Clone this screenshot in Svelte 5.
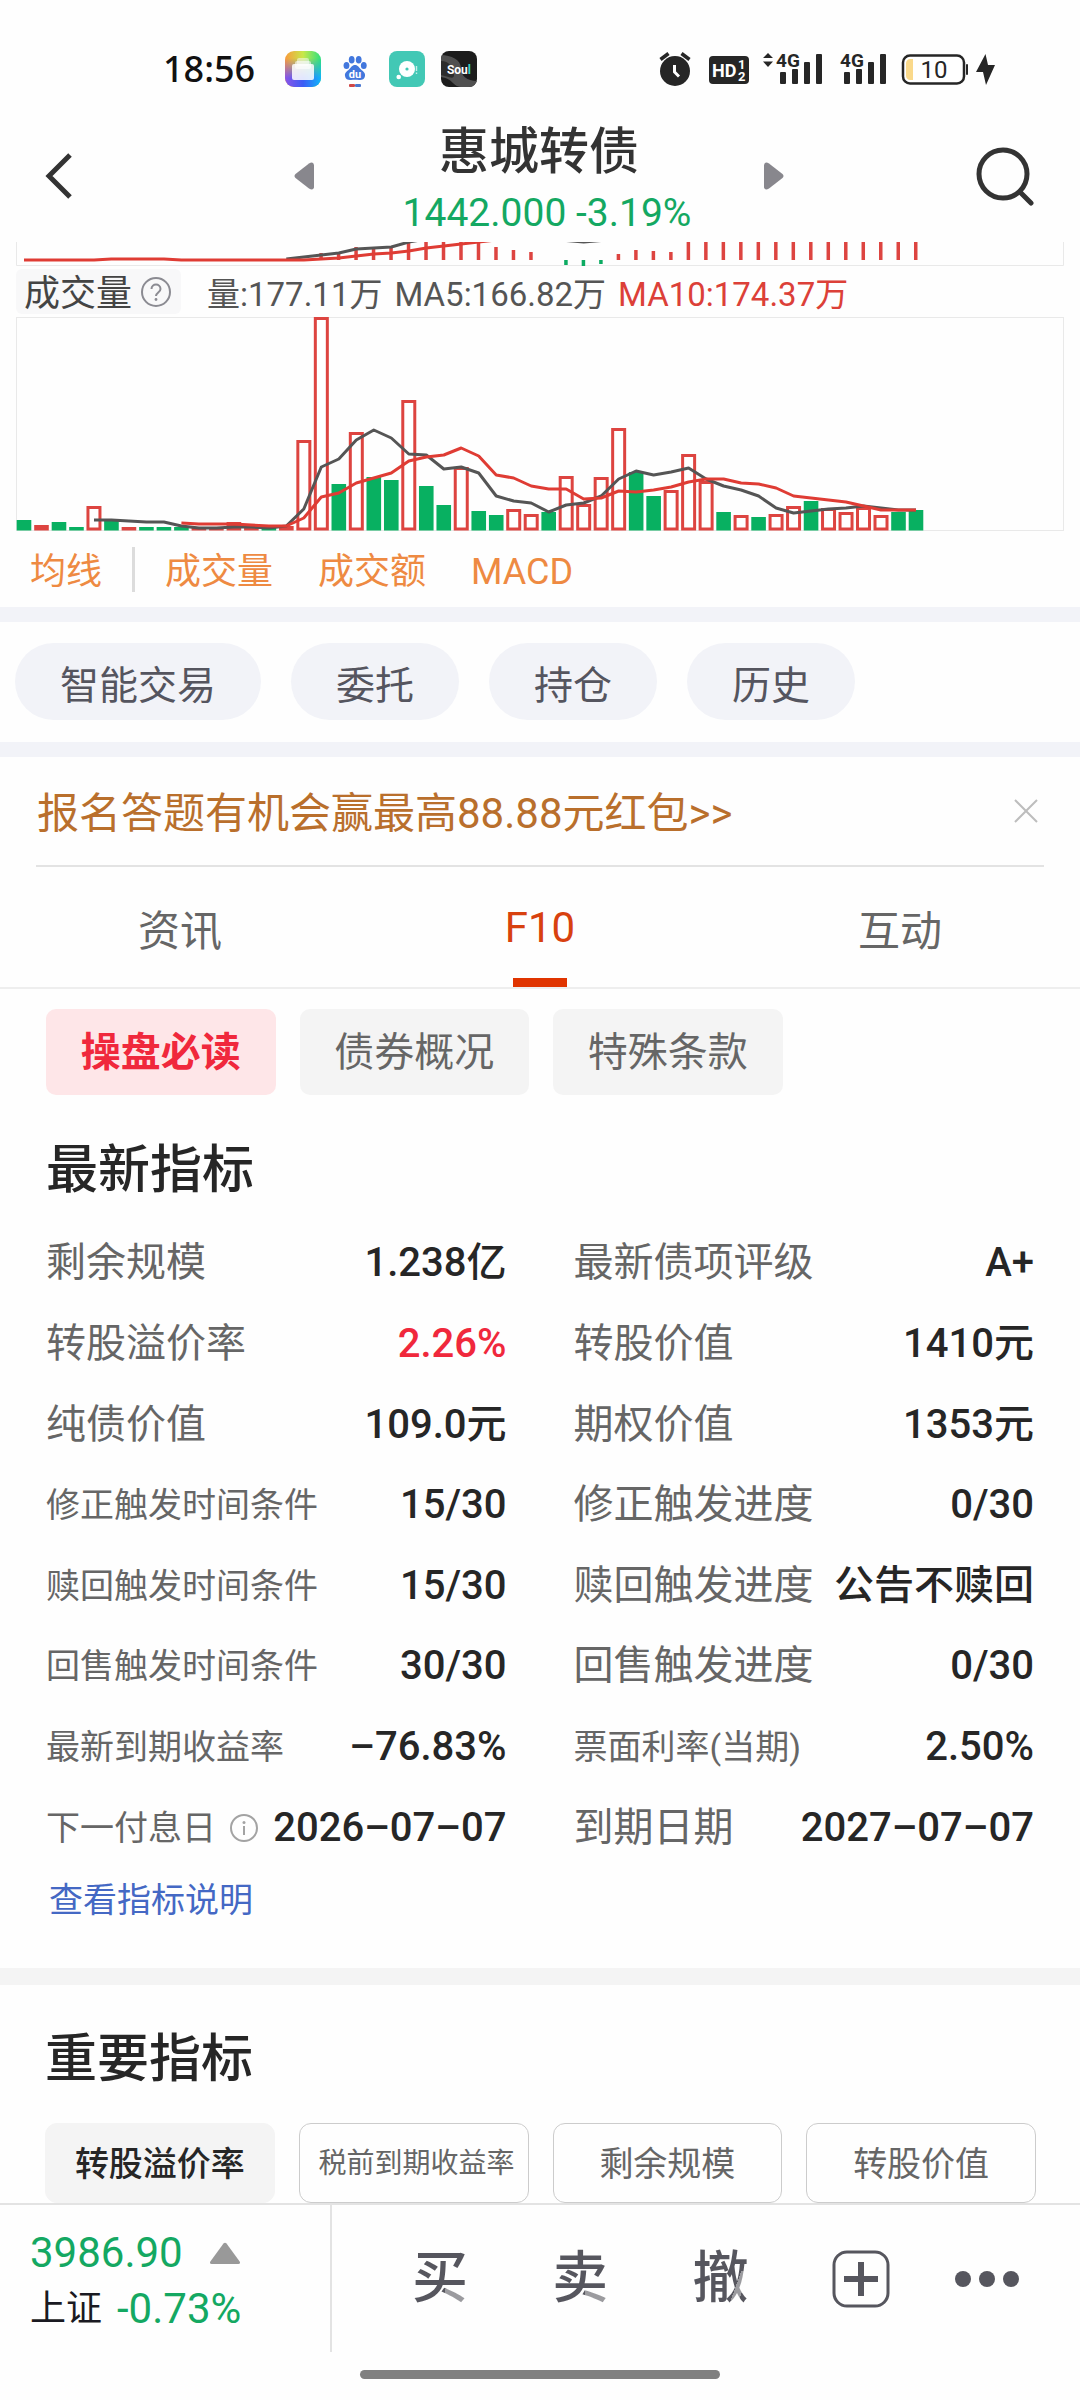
<script lang="ts">
  // Chart units: the plot is 213 units tall and its floor is y = 213.
  const STEP = 17.49;
  const FLOOR = 213;
  const cx = (i: number) => 8 + STEP * i;

  type Bar = [number, 'u' | 'd'];
  const volumes: Bar[] = [
    [10, 'd'], [5, 'u'], [8, 'd'], [3, 'd'], [24, 'u'], [9, 'd'], [3, 'u'], [3, 'd'], [3, 'd'], [3, 'd'],
    [3, 'u'], [3, 'u'], [8, 'u'], [3, 'u'], [3, 'd'], [4, 'u'], [90, 'u'], [213, 'u'], [46, 'd'], [98, 'u'],
    [53, 'd'], [50, 'd'], [130, 'u'], [44, 'd'], [25, 'd'], [63, 'u'], [19, 'd'], [15, 'd'], [21, 'u'], [16, 'u'],
    [18, 'd'], [54, 'u'], [26, 'u'], [53, 'u'], [102, 'u'], [58, 'd'], [34, 'd'], [40, 'u'], [76, 'u'], [49, 'u'],
    [18, 'd'], [15, 'u'], [13, 'd'], [16, 'u'], [24, 'u'], [29, 'd'], [22, 'u'], [18, 'u'], [23, 'u'], [15, 'u'],
    [18, 'd'], [20, 'd']
  ];
  const ma5 = [
    10, 10, 9, 8, 8, 4, 2, 2, 3, 3, 2, 4, 21, 63, 71, 90, 100, 92, 76, 75, 61, 63, 57, 34, 29, 27, 18, 25, 27, 34,
    51, 59, 55, 58, 62, 51, 44, 40, 34, 22, 17, 19, 21, 22, 24, 22, 20, 20
  ];
  const ma10 = [
    7, 6, 6, 6, 5, 4, 4, 12, 33, 37, 47, 52, 57, 69, 73, 75, 82, 74, 55, 52, 44, 41, 41, 31, 32, 39, 38, 40, 43, 48,
    51, 51, 47, 46, 42, 34, 32, 30, 28, 24, 20, 20, 20
  ];
  const pts = (ys: number[], start: number) => ys.map((y, k) => `${cx(start + k).toFixed(1)},${y}`).join(' ');
  const above = (vs: number[]) => vs.map((v) => FLOOR - v);

  // MACD columns: [index, top, bottom], zero line at y = 18.
  const sticks: [number, number, number][] = [
    [17, 11, 18], [18, 12, 18], [19, 5, 18], [20, 7, 18], [21, 6, 18], [22, 0, 18], [23, 0, 18], [24, 0, 18],
    [25, 0, 18], [26, 0, 18], [27, 5, 18], [28, 8, 18], [29, 10, 18], [31, 18, 23], [32, 18, 24], [33, 18, 22],
    [34, 12, 18], [35, 8, 18], [36, 9, 18], [37, 10, 18],
    ...Array.from({ length: 14 }, (_, k): [number, number, number] => [38 + k, 0, 18])
  ];
  const dea = [18, 18, 18, 18, 18, 17, 17, 17, 17, 18, 18, 18, 18, 18, 18, 18, 18, 17, 16, 14, 12, 11, 9, 6, 4, 2, 0, -2];
  const dif = [17, 15, 13, 11, 7, 6, 5, 0, -3];

  const actions = ['智能交易', '委托', '持仓', '历史'];
  const tabs = ['资讯', 'F10', '互动'];
  const sections = ['操盘必读', '债券概况', '特殊条款'];
  const metrics = ['转股溢价率', '税前到期收益率', '剩余规模', '转股价值'];
  let tab = $state('F10');
  let section = $state('操盘必读');
  let metric = $state('转股溢价率');

  type Item = { k: string; v: string; small?: boolean; red?: boolean; info?: boolean };
  const items: Item[] = [
    { k: '剩余规模', v: '1.238亿' },
    { k: '最新债项评级', v: 'A+' },
    { k: '转股溢价率', v: '2.26%', red: true },
    { k: '转股价值', v: '1410元' },
    { k: '纯债价值', v: '109.0元' },
    { k: '期权价值', v: '1353元' },
    { k: '修正触发时间条件', v: '15/30', small: true },
    { k: '修正触发进度', v: '0/30' },
    { k: '赎回触发时间条件', v: '15/30', small: true },
    { k: '赎回触发进度', v: '公告不赎回' },
    { k: '回售触发时间条件', v: '30/30', small: true },
    { k: '回售触发进度', v: '0/30' },
    { k: '最新到期收益率', v: '–76.83%', small: true },
    { k: '票面利率(当期)', v: '2.50%', small: true },
    { k: '下一付息日', v: '2026–07–07', small: true, info: true },
    { k: '到期日期', v: '2027–07–07' }
  ];
</script>

{#snippet signal(arrows: boolean)}
  <svg class="signal" class:second={!arrows} width={arrows ? 60 : 48} height="36" viewBox="{arrows ? 0 : 12} 0 {arrows ? 60 : 48} 36" aria-hidden="true">
    {#if arrows}
      <path d="M0 7l5-5 5 5zM0 10.500l5 5.500 5-5.500z" />
    {/if}
    <text x="13" y="16" font-size="19" font-weight="700">4G</text>
    <rect x="17" y="21" width="6" height="12" rx="1" />
    <rect x="29" y="18" width="6" height="15" rx="1" />
    <rect x="41" y="11" width="6" height="22" rx="1" />
    <rect x="53" y="3" width="6" height="30" rx="1" />
  </svg>
{/snippet}

<div class="app">
  <div class="status">
    <div class="group apps">
      <span class="clock">18:56</span>
      <svg width="36" height="36" viewBox="0 0 36 36" aria-hidden="true">
        <defs>
          <linearGradient id="top" x1="0" y1="0" x2="1" y2="0">
            <stop offset="0" stop-color="#f99b3c" /><stop offset=".5" stop-color="#c8e84a" /><stop offset="1" stop-color="#2fe07c" />
          </linearGradient>
          <linearGradient id="low" x1="0" y1="0" x2="1" y2="0">
            <stop offset="0" stop-color="#8a55e8" /><stop offset=".5" stop-color="#3c5cf5" /><stop offset="1" stop-color="#10b4fb" />
          </linearGradient>
          <linearGradient id="fade" x1="0" y1="0" x2="0" y2="1">
            <stop offset=".2" stop-color="#fff" stop-opacity="0" /><stop offset=".75" stop-color="#fff" />
          </linearGradient>
          <mask id="lower"><rect width="36" height="36" fill="url(#fade)" /></mask>
        </defs>
        <rect width="36" height="36" rx="9" fill="url(#top)" />
        <rect width="36" height="36" rx="9" fill="url(#low)" mask="url(#lower)" />
        <rect x="12" y="7" width="12" height="8" rx="2" fill="#fff" opacity=".5" />
        <rect x="10" y="10" width="16" height="8" rx="2" fill="#fff" opacity=".6" />
        <rect x="7" y="13" width="22" height="16" rx="2" fill="#fff" opacity=".85" />
      </svg>
      <svg width="36" height="36" viewBox="0 0 36 36" aria-hidden="true">
        <g fill="#4277dd">
          <ellipse cx="9.500" cy="14.500" rx="2.900" ry="3.600" /><ellipse cx="14.700" cy="8.800" rx="2.900" ry="3.800" />
          <ellipse cx="21.700" cy="8.800" rx="2.900" ry="3.800" /><ellipse cx="26.800" cy="14.500" rx="2.900" ry="3.600" />
          <path d="M18 14c3 0 4 2.500 6 4.500s4.500 3 4 6.500-3.500 4.300-6 4-5.500-.3-8 0-5.500-.5-6-4 2-4.500 4-6.500 3-4.500 6-4.500z" />
        </g>
        <text class="fnt" x="18" y="26.500" text-anchor="middle" font-size="11" font-weight="700" fill="#fff">du</text>
        <rect x="12" y="33" width="6" height="3" rx="1" fill="#cf4747" /><rect x="18" y="33" width="6" height="3" rx="1" fill="#4b78cf" />
      </svg>
      <svg width="36" height="36" viewBox="0 0 36 36" aria-hidden="true">
        <rect width="36" height="36" rx="8" fill="#42c8b5" />
        <circle cx="18" cy="18" r="8" fill="#fff" /><circle cx="18" cy="18" r="1.600" fill="#42c8b5" />
        <circle cx="9.700" cy="26" r="2.300" fill="#fff" />
        <path d="M27.500 15v5M27.500 21.500v1.500" stroke="#fff" stroke-width="1.400" opacity=".7" />
      </svg>
      <svg width="36" height="36" viewBox="0 0 36 36" aria-hidden="true">
        <defs><clipPath id="tile"><rect width="36" height="36" rx="8" /></clipPath></defs>
        <g clip-path="url(#tile)">
          <rect width="36" height="36" fill="#1c1c1c" />
          <path d="M0 4c10 0 20 5 20 13s6 13 16 13v6H22C10 36 14 28 0 26z" fill="#505050" />
          <path d="M0 10c8 0 12 6 13 13S6 25 0 24z" fill="#2c2c2c" />
        </g>
        <text class="fnt" x="18" y="23" text-anchor="middle" font-size="12" font-weight="700" fill="#fff">Sou<tspan fill="#35d6c8">l</tspan></text>
      </svg>
    </div>
    <div class="group radio">
      <svg width="32" height="36" viewBox="0 0 32 36" aria-hidden="true">
        <circle cx="16" cy="20" r="15" fill="#262626" />
        <path d="M1.500 8.500l8-6M30.500 8.500l-8-6" stroke="#262626" stroke-width="3.600" fill="none" />
        <path d="M15.500 14v7l4.500 4.500" stroke="#fff" stroke-width="3" fill="none" />
      </svg>
      <svg class="hd" width="40" height="36" viewBox="0 0 40 36" aria-hidden="true">
        <rect y="5" width="40" height="28" rx="4" fill="#262626" />
        <text class="fnt" x="3" y="26" font-size="18" font-weight="700">HD</text>
        <text class="fnt" x="29" y="18" font-size="13" font-weight="700">1</text>
        <text class="fnt" x="29" y="30" font-size="13" font-weight="700">2</text>
      </svg>
      {@render signal(true)}
      {@render signal(false)}
      <svg width="68" height="36" viewBox="0 0 68 36" aria-hidden="true">
        <rect x="2" y="4.500" width="61" height="28" rx="7" fill="#fff" stroke="#262626" stroke-width="2.500" />
        <path d="M12 8v21H9c-2 0-4-2-4-4V12c0-2 2-4 4-4z" fill="#fad98b" />
        <rect x="65" y="13" width="2" height="11" rx="1" fill="#262626" />
        <text class="fnt" x="33" y="27" text-anchor="middle" font-size="24" fill="#262626">10</text>
      </svg>
      <svg class="bolt" width="20" height="36" viewBox="0 0 20 36" aria-hidden="true">
        <path d="M9.500 3L0 21h7l3 13 9-20h-7z" fill="#262626" />
      </svg>
    </div>
  </div>

  <header class="head">
    <button class="icon" aria-label="返回">
      <svg width="30" height="46" viewBox="0 0 30 46"><path d="M26 2L5 23l21 21" fill="none" stroke="#333" stroke-width="5" /></svg>
    </button>
    <div class="switch">
      <button class="icon" aria-label="上一只">
        <svg width="20" height="28" viewBox="0 0 20 28"><path d="M15 1.500L1.500 12q-2 2 0 4L15 26.500q4 2.500 5-1V3q-1-4-5-1.500z" fill="#88878d" /></svg>
      </button>
      <div class="title">
        <h1>惠城转债</h1>
        <p>1442.000 -3.19%</p>
      </div>
      <button class="icon" aria-label="下一只">
        <svg width="20" height="28" viewBox="0 0 20 28"><path d="M5 1.500L18.500 12q2 2 0 4L5 26.500q-4 2.500-5-1V3q1-4 5-1.500z" fill="#88878d" /></svg>
      </button>
    </div>
    <button class="icon search" aria-label="搜索">
      <svg width="58" height="60" viewBox="0 0 58 60">
        <circle cx="27" cy="28" r="24" fill="none" stroke="#333" stroke-width="5" />
        <path d="M44 46l11 11" stroke="#333" stroke-width="5" stroke-linecap="round" />
      </svg>
    </button>
  </header>

  <section class="charts">
    <svg class="macd" viewBox="0 0 1048 24" aria-label="MACD">
      <path d="M0.500 0V23.500H1047.500V0" fill="none" stroke="#e9e9e9" />
      {#each sticks as [i, a, b]}
        <rect x={cx(i) - 2} y={a} width="3.500" height={b - a} fill={a === 18 ? '#0cab62' : '#dd4440'} />
      {/each}
      <polyline points={pts(dif, 15)} class="dark" />
      <path d="M{cx(31)} 0H{cx(33)}L{cx(32)} 1.500z" fill="#555" />
      <polyline points={pts(dea, 0)} class="red" />
    </svg>
    <div class="legend">
      <button class="pick"><span>成交量</span>
        <svg width="30" height="30" viewBox="0 0 30 30" aria-hidden="true">
          <circle cx="15" cy="15" r="14" fill="none" stroke="#8b8b92" stroke-width="2" />
          <path d="M10.500 12c0-6 9-6 9 0 0 3.500-4.500 3.500-4.500 7" fill="none" stroke="#8b8b92" stroke-width="2" />
          <circle cx="15" cy="22.500" r="1.400" fill="#8b8b92" />
        </svg>
      </button>
      <span>量:177.11万</span><span>MA5:166.82万</span><span class="ma10">MA10:174.37万</span>
    </div>
    <svg class="volume" viewBox="0 0 1048 214" aria-label="成交量">
      <rect x=".5" y=".5" width="1047" height="213" fill="none" stroke="#e9e9e9" />
      {#each volumes as [v, dir], i}
        {#if dir === 'd' || v < 9}
          <rect x={cx(i) - 7.3} y={FLOOR - v} width="14.600" height={v + 0.500} fill={dir === 'd' ? '#08b061' : '#dd4440'} />
        {:else}
          <rect x={cx(i) - 6} y={FLOOR - v + 1.5} width="12" height={v - 2.5} fill="#fff" stroke="#dd4440" stroke-width="3" />
        {/if}
      {/each}
      <polyline points={pts(above(ma5), 4)} class="dark" />
      <polyline points={pts(above(ma10), 9)} class="red" />
    </svg>
    <nav class="indexes">
      <button class="sep">均线</button>
      <button>成交量</button>
      <button>成交额</button>
      <button>MACD</button>
    </nav>
  </section>

  <nav class="actions">
    {#each actions as a}<button>{a}</button>{/each}
  </nav>

  <aside class="promo">
    <a href="#promo">报名答题有机会赢最高88.88元红包&gt;&gt;</a>
    <button class="icon" aria-label="关闭">
      <svg width="24" height="24" viewBox="0 0 24 24"><path d="M1 1l22 22M23 1L1 23" stroke="#bdbdbd" stroke-width="2" /></svg>
    </button>
  </aside>

  <nav class="tabs">
    {#each tabs as t}
      <button class:on={tab === t} onclick={() => (tab = t)}>{t}</button>
    {/each}
  </nav>

  <div class="quad sections">
    {#each sections as s}
      <button class:on={section === s} onclick={() => (section = s)}>{s}</button>
    {/each}
  </div>

  <section class="latest">
    <h2>最新指标</h2>
    <dl>
      {#each items as it}
        <div class="row">
          <dt class:small={it.small}>
            {it.k}
            {#if it.info}
              <svg width="28" height="28" viewBox="0 0 28 28" aria-hidden="true">
                <circle cx="14" cy="14" r="13" fill="none" stroke="#a3a3a3" stroke-width="2" />
                <circle cx="14" cy="8.500" r="1.500" fill="#a3a3a3" />
                <path d="M14 12v9" stroke="#a3a3a3" stroke-width="2" />
              </svg>
            {/if}
          </dt>
          <dd class:rise={it.red}>{it.v}</dd>
        </div>
      {/each}
    </dl>
    <a href="#notes">查看指标说明</a>
  </section>

  <section class="key">
    <h2>重要指标</h2>
    <div class="quad metrics">
      {#each metrics as m}
        <button class:on={metric === m} class:long={m.length > 6} onclick={() => (metric = m)}>{m}</button>
      {/each}
    </div>
  </section>

  <footer>
    <div class="bar">
      <div class="index">
        <p class="fall">3986.90
          <svg width="32" height="22" viewBox="0 0 32 22" aria-hidden="true"><path d="M14.500 1.500q1.500-1.500 3 0L31 20q.5 2-1.500 2h-27Q.5 22 1 20z" fill="#999" /></svg>
        </p>
        <p><span class="name">上证</span><span class="fall">-0.73%</span></p>
      </div>
      <div class="trade">
        <button class="word">买</button>
        <button class="word">卖</button>
        <button class="word slash">撤</button>
        <button aria-label="添加">
          <svg width="58" height="58" viewBox="0 0 58 58">
            <rect x="2" y="2" width="54" height="54" rx="13" fill="none" stroke="#56565e" stroke-width="3" />
            <path d="M29 12v34M12 29h34" stroke="#56565e" stroke-width="6" />
          </svg>
        </button>
        <button aria-label="更多">
          <svg width="64" height="16" viewBox="0 0 64 16" fill="#56565e"><circle cx="8" cy="8" r="8" /><circle cx="32" cy="8" r="8" /><circle cx="56" cy="8" r="8" /></svg>
        </button>
      </div>
    </div>
    <div class="pill"></div>
  </footer>
</div>

<style>
  :global(body) {
    background: #fefefe;
  }
  .app {
    display: flex;
    flex-direction: column;
    min-height: 100vh;
    background: #fefefe;
    color: #262626;
    font-family: Roboto, 'Noto Sans CJK SC', sans-serif;
  }
  h1, h2, p, dl, dd {
    margin: 0;
  }
  button {
    margin: 0;
    padding: 0;
    border: 0;
    background: none;
    color: inherit;
    font: inherit;
    cursor: pointer;
  }
  a {
    text-decoration: none;
  }
  svg {
    display: block;
    flex: none;
  }

  .status {
    display: flex;
    justify-content: space-between;
    align-items: center;
    height: 42px;
    padding: 48px 84px 0 163px;
  }
  .group {
    display: flex;
    align-items: center;
  }
  .apps {
    gap: 16px;
  }
  .clock {
    margin-right: 14px;
    color: #111;
    font-family: 'Noto Sans', sans-serif;
    font-size: 36px;
    font-weight: 500;
    line-height: 42px;
  }
  .radio {
    gap: 14px;
  }
  .hd {
    margin-left: 4px;
  }
  .second {
    margin-left: 2px;
  }
  .radio .bolt {
    margin-left: -7px;
  }
  .fnt, .signal text {
    font-family: Roboto, sans-serif;
  }
  .hd text {
    fill: #fff;
  }
  .signal {
    overflow: visible;
    fill: #262626;
  }

  .head {
    display: grid;
    grid-template-columns: 1fr 490px 1fr;
    align-items: center;
    height: 132px;
    padding: 20px 46px 0 44px;
  }
  .icon {
    display: flex;
    align-items: center;
  }
  .search {
    justify-self: end;
  }
  .switch {
    display: flex;
    align-items: center;
    justify-content: space-between;
  }
  .title {
    padding-top: 10px;
    text-align: center;
  }
  h1 {
    color: #333;
    font-size: 50px;
    font-weight: 500;
    line-height: 64px;
  }
  .title p {
    margin: 0 -16px 0 0;
    color: #14a862;
    font-size: 39px;
    line-height: 58px;
  }

  .charts {
    padding: 0 16px 15px;
  }
  .charts > svg {
    width: 100%;
    height: auto;
  }
  .dark, .red {
    fill: none;
    stroke-width: 3;
    stroke-linejoin: round;
  }
  .dark {
    stroke: #555;
  }
  .red {
    stroke: #df3c34;
  }
  .legend {
    display: flex;
    align-items: center;
    gap: 12px;
    height: 51px;
    color: #555;
    font-size: 33px;
    white-space: nowrap;
  }
  .pick {
    display: flex;
    align-items: center;
    gap: 9px;
    height: 45px;
    margin-right: 14px;
    padding: 0 10px 0 8px;
    border-radius: 6px;
    background: #f8f8f9;
    color: #444;
    font-size: 36px;
    line-height: 45px;
  }
  .pick span {
    padding-top: 5px;
  }
  .ma10 {
    color: #dc4038;
  }
  .indexes {
    display: flex;
    align-items: center;
    gap: 45px;
    margin-top: 16px;
    padding-left: 14px;
    color: #ee8a42;
    font-size: 36px;
    line-height: 45px;
  }
  .indexes button {
    height: 45px;
    padding-top: 3px;
  }
  .indexes .sep {
    margin-right: -15px;
    padding-right: 30px;
    border-right: 3px solid #dcdcdc;
  }

  .actions {
    display: flex;
    gap: 30px;
    padding: 21px 15px 22px;
    border-top: 15px solid #f2f3f8;
    border-bottom: 15px solid #f2f3f8;
  }
  .actions button {
    height: 77px;
    padding: 0 45px;
    border-radius: 39px;
    background: #f2f3f8;
    color: #55555f;
    font-size: 39px;
  }

  .promo {
    display: flex;
    align-items: center;
    justify-content: space-between;
    height: 108px;
    margin: 0 36px;
    padding: 0 6px 0 1px;
    border-bottom: 2px solid #e3e3e3;
  }
  .promo a {
    padding-top: 5px;
    color: #b96f2c;
    font-size: 42px;
    line-height: 60px;
  }

  .tabs {
    display: grid;
    grid-template-columns: repeat(3, 1fr);
    border-bottom: 2px solid #eee;
  }
  .tabs button {
    position: relative;
    height: 120px;
    color: #666;
    font-size: 42px;
  }
  .tabs .on {
    color: #d8410f;
  }
  .tabs .on::after {
    content: '';
    position: absolute;
    bottom: 0;
    left: calc(50% - 27px);
    width: 54px;
    height: 9px;
    background: #e03400;
  }

  .quad {
    display: grid;
    grid-template-columns: repeat(4, 1fr);
    gap: 24px;
  }
  .sections {
    padding: 20px 44px 0 46px;
  }
  .sections button {
    height: 86px;
    padding-bottom: 6px;
    border-radius: 10px;
    background: #f4f4f4;
    color: #666;
    font-size: 40px;
  }
  .sections .on {
    background: #fee6e8;
    color: #f0283c;
    font-weight: 700;
  }

  h2 {
    font-size: 52px;
    font-weight: 500;
    line-height: 64px;
  }
  .latest {
    padding: 44px 46px 43px;
    border-bottom: 17px solid #f4f4f4;
  }
  dl {
    display: grid;
    grid-template-columns: 1fr 1fr;
    grid-auto-rows: 1fr;
    column-gap: 67px;
    min-height: 645px;
    margin-top: 20px;
  }
  .row {
    display: flex;
    align-items: center;
    justify-content: space-between;
    white-space: nowrap;
  }
  dt {
    display: flex;
    align-items: center;
    gap: 14px;
    color: #666;
    font-size: 40px;
    line-height: 60px;
  }
  .small {
    font-size: 34px;
  }
  dd {
    font-size: 40px;
    font-weight: 500;
    line-height: 60px;
  }
  .rise {
    color: #f0283c;
  }
  .latest a {
    display: inline-block;
    margin: 7px 0 0 3px;
    color: #4468c4;
    font-size: 34px;
    line-height: 50px;
  }

  .key {
    padding: 43px 44px 0 45px;
  }
  .metrics {
    margin-top: 31px;
  }
  .metrics button {
    height: 80px;
    padding-bottom: 4px;
    border: 1px solid #ccc;
    border-radius: 12px;
    color: #666;
    font-size: 34px;
    white-space: nowrap;
  }
  .metrics .long {
    padding-left: 6px;
    font-size: 28px;
  }
  .metrics .on {
    border-color: #f4f4f4;
    background: #f4f4f4;
    color: #262626;
    font-weight: 500;
  }

  footer {
    margin-top: auto;
    border-top: 2px solid #e3e3e3;
  }
  .bar {
    display: flex;
    height: 147px;
  }
  .index {
    width: 300px;
    padding: 20px 0 0 30px;
    border-right: 2px solid #e3e3e3;
    font-size: 42px;
    line-height: 56px;
  }
  .index p {
    display: flex;
    align-items: center;
    gap: 26px;
  }
  .index p + p {
    gap: 15px;
  }
  .fall {
    color: #14a862;
  }
  .name {
    color: #1a1a22;
    font-size: 36px;
  }
  .trade {
    flex: 1;
    display: grid;
    grid-template-columns: 5fr 5fr 5fr 5fr 4fr;
    padding: 0 37px 0 38px;
  }
  .trade button {
    display: flex;
    align-items: center;
    justify-content: center;
  }
  .word {
    font-size: 56px;
    font-weight: 500;
    line-height: 147px;
  }
  .trade .word {
    background: linear-gradient(#9b9b9f, #9b9b9f) 75px 84px / 40px 40px no-repeat #56565e;
    background-clip: text;
    color: transparent;
  }
  .trade .slash {
    background: linear-gradient(110deg, #56565e 46%, #9b9b9f 46%, #9b9b9f 58%, #56565e 58%) 60px 66px / 50px 50px no-repeat #56565e;
    background-clip: text;
  }
  .pill {
    width: 360px;
    height: 9px;
    margin: 18px auto 21px;
    border-radius: 5px;
    background: #808080;
  }
</style>
